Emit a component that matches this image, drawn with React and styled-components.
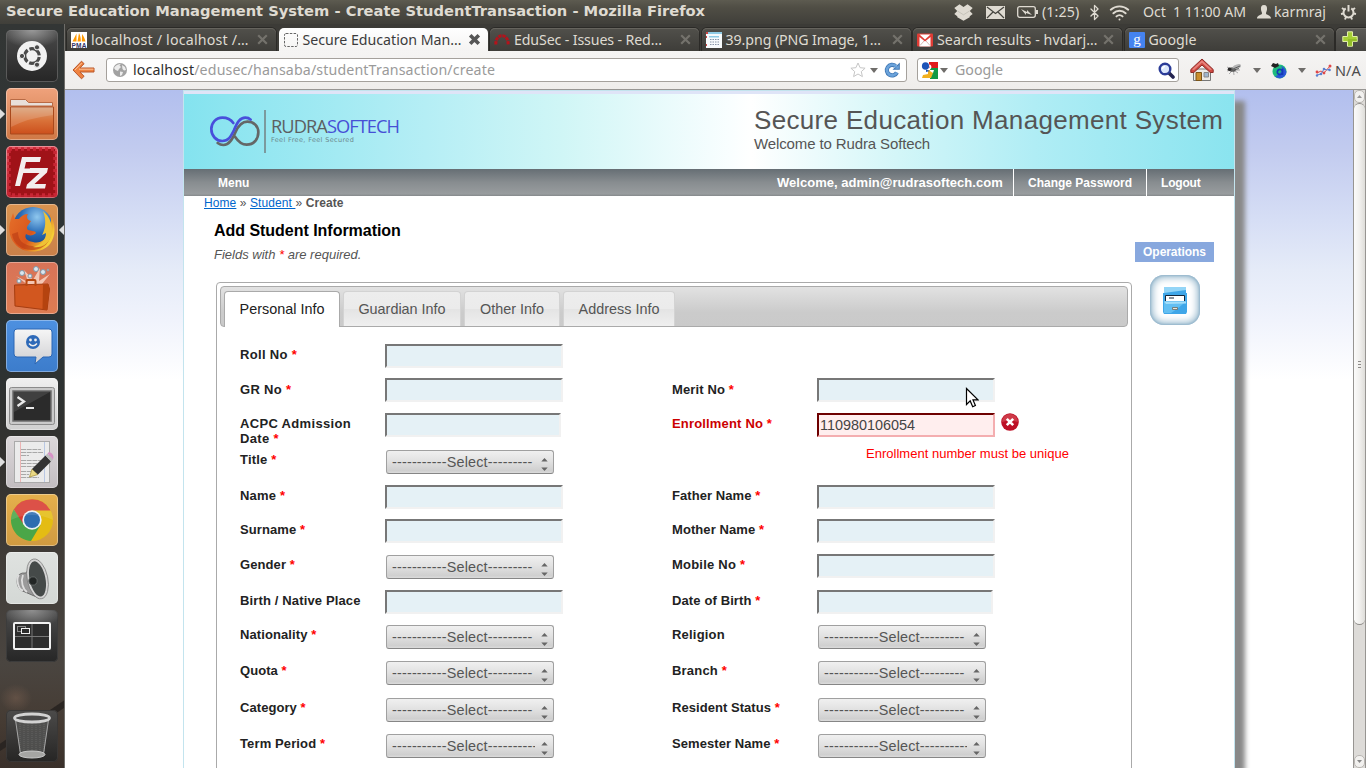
import React from "react";
import styled, { createGlobalStyle, css } from "styled-components";
import { Bluetooth, Wifi } from "lucide-react";

const sans = '"Liberation Sans", Arial, sans-serif';
const ui = '"Noto Sans", "Open Sans", sans-serif';

const Global = createGlobalStyle`
  * { box-sizing: border-box; }
  html, body { margin: 0; padding: 0; overflow: hidden; background: #3c3b37; }
  svg { display: block; flex: none; }
`;

const Screen = styled.div`
  width: 1366px;
  height: 768px;
  overflow: hidden;
  display: flex;
  flex-direction: column;
  font-family: ${sans};
`;

/* ---------- desktop panel ---------- */
const Panel = styled.header`
  height: 24px;
  flex: none;
  display: flex;
  align-items: center;
  justify-content: space-between;
  padding: 0 7px 0 6px;
  background: linear-gradient(#5d5b50, #504e45 30%, #403f3a);
  color: #dfdbd2;
`;
const WindowTitle = styled.div`
  font: bold 13.33px/24px "DejaVu Sans", sans-serif;
  transform: scaleX(1.1005);
  transform-origin: 0 50%;
  white-space: nowrap;
`;
const Indicators = styled.div`
  display: flex;
  align-items: center;
  height: 24px;
  width: 405px;
`;
const Indicator = styled.div`
  display: flex;
  align-items: center;
  flex: none;
  width: ${(p) => p.$w}px;
  font: 14.2px/24px ${ui};
  letter-spacing: ${(p) => p.$ls || 0}px;
  white-space: pre;
`;

/* ---------- launcher ---------- */
const Body = styled.div`
  flex: 1;
  display: flex;
  min-height: 0;
`;
const Launcher = styled.nav`
  width: 65px;
  flex: none;
  display: flex;
  flex-direction: column;
  gap: 6px;
  padding: 6px 0 6px 0;
  border-right: 1px solid #6f6d69;
  background:
    radial-gradient(ellipse 16px 14px at 16px 674px, rgba(120, 95, 80, 0.55), transparent),
    linear-gradient(146deg, transparent calc(91.5% - 1px), #2a2522 91.5%, #2a2522 92.3%, transparent calc(92.3% + 1px)),
    linear-gradient(#333635, #2b3233 42%, #34322f 60%, #403c38 72%, #4a4540 86%, #453b33 94%, #3a302a);
`;
const LaunchRow = styled.div`
  height: 52px;
  flex: none;
  display: flex;
  align-items: center;
  ${(p) => p.$last && "margin-top: auto;"}
`;
const Pip = styled.div`
  width: 6px;
  height: 10px;
  flex: none;
  background: ${(p) => (p.$on ? "#dedede" : "transparent")};
  clip-path: ${(p) =>
    p.$right ? "polygon(100% 0, 15% 50%, 100% 100%)" : "polygon(0 0, 85% 50%, 0 100%)"};
`;
const Tile = styled.div`
  width: 52px;
  height: 52px;
  flex: none;
  border-radius: 5px;
  overflow: hidden;
  background: ${(p) => p.$bg};
  box-shadow: inset 0 0 0 1px ${(p) => p.$edge || "rgba(255,255,255,0.35)"};
`;

/* ---------- browser chrome ---------- */
const Browser = styled.main`
  flex: 1;
  display: flex;
  flex-direction: column;
  min-width: 0;
`;
const TabStrip = styled.div`
  height: 27px;
  flex: none;
  display: flex;
  gap: 2.5px;
  padding: 4px 0 0 2px;
  background: #3c3b37;
`;
const Tab = styled.div`
  width: 209px;
  flex: none;
  display: flex;
  align-items: center;
  padding: 0 7px 0 4px;
  border-radius: 5px 5px 0 0;
  font: 14.2px/22px ${ui};
  ${(p) =>
    p.$active
      ? css`
          color: #3c3c3c;
          background: linear-gradient(#fff, #f4f3f2);
        `
      : css`
          color: #dfdbd2;
          background: linear-gradient(#51504b, #3e3d39);
          box-shadow: inset 0 1px 0 #66645e, 0 0 0 1px #2b2a27;
        `}
`;
const TabText = styled.span`
  flex: 1;
  padding-left: ${(p) => p.$gap || 2}px;
  letter-spacing: ${(p) => p.$ls || 0}px;
  white-space: nowrap;
`;
const NewTab = styled.div`
  width: 32px;
  padding: 3px 0 0 6px;
  border-radius: 5px 0 0 0;
  background: linear-gradient(#5d5c58, #454440);
  box-shadow: inset 0 1px 0 #6e6c66, 0 0 0 1px #2b2a27;
`;
const Toolbar = styled.div`
  height: 39px;
  flex: none;
  display: flex;
  align-items: center;
  padding: 0 0 0 7px;
  background: linear-gradient(#f5f4f3, #efedeb);
  border-bottom: 1px solid #989693;
`;
const Field = styled.div`
  width: ${(p) => p.$w}px;
  height: 24px;
  flex: none;
  display: flex;
  align-items: center;
  margin-left: ${(p) => p.$ml}px;
  padding: 0 ${(p) => p.$px || 5}px;
  background: #fff;
  border: 1px solid #a5a19c;
  border-radius: 3px;
  font: 14.2px/22px ${ui};
  color: #9a9a9a;
`;
const Grow = styled.span`
  flex: 1;
  padding-left: ${(p) => p.$pl}px;
  letter-spacing: ${(p) => p.$ls || 0}px;
  white-space: nowrap;
  b { font-weight: 400; color: #2e2e2e; }
`;
const Tools = styled.div`
  display: flex;
  align-items: center;
  padding-left: 11px;
  font: 14.5px/22px ${ui};
  color: #4b4b4b;
`;
const ToolGap = styled.span`
  width: 12px;
`;
const Caret = styled.i`
  width: 0;
  height: 0;
  flex: none;
  margin: 0 ${(p) => p.$r || 0}px 0 ${(p) => p.$l || 0}px;
  border: 4px solid transparent;
  border-top: 5px solid #6f6d6a;
  border-bottom: 0;
`;

/* ---------- page ---------- */
const View = styled.div`
  flex: 1;
  display: flex;
  min-height: 0;
`;
const Page = styled.div`
  flex: 1;
  overflow: hidden;
  padding-left: 118px;
  background: linear-gradient(#b2bfee, #c2cbef 60px, #d6def5 130px, #e5ebf8 180px, #f0f3fc 230px, #fff 290px);
`;
const Sheet = styled.div`
  width: 1052px;
  height: 900px;
  border: solid #c3e4ee;
  border-width: 1px 1px 0;
  background: #fff;
  box-shadow: 10px 11px 5px #888;
`;
const Banner = styled.div`
  height: 78px;
  display: flex;
  justify-content: space-between;
  border-top: 3px solid #dfe4f7;
  background: linear-gradient(90deg, #84e3ef, #b5eef5 23%, #d0f6f6 36%, #f9feff 52%, #fff 54%, #d3f6f8 68%, #b0edf5 81%, #8ae4ef);
`;
const Logo = styled.div`
  display: flex;
  padding: 16px 0 0 26px;
`;
const LogoRule = styled.div`
  width: 2px;
  height: 43px;
  margin: 0 5px 0 4px;
  background: #7b9a9e;
`;
const LogoName = styled.div`
  margin-top: 5.5px;
  font: 18.3px/20px "Open Sans", sans-serif;
  letter-spacing: -0.97px;
  color: #5c5f62;
  span { color: #4650d6; }
`;
const LogoTag = styled.div`
  margin-top: 0.5px;
  font: 6.5px/8px "DejaVu Sans", sans-serif;
  letter-spacing: 0.36px;
  color: #6b878c;
  white-space: nowrap;
`;
const LogoPic = styled.div`
  padding-top: 4.5px;
`;
const Heading = styled.div`
  width: 480px;
  padding-top: 11px;
  color: #555;
`;
const Big = styled.div`
  font-size: 26px;
  line-height: 30px;
  letter-spacing: 0.33px;
  white-space: nowrap;
`;
const Small = styled.div`
  font-size: 15px;
  line-height: 18px;
  letter-spacing: -0.12px;
`;
const NavBar = styled.div`
  height: 27px;
  display: flex;
  justify-content: flex-end;
  background: linear-gradient(#666e74, #888d90 50%, #989c9e 92%, #85898b);
  color: #fff;
  font-weight: bold;
  font-size: 12px;
  line-height: 28px;
`;
const NavMenu = styled.div`
  margin: 0 auto 0 34px;
`;
const NavItem = styled.div`
  padding-left: 14px;
  width: ${(p) => p.$w}px;
  font-size: ${(p) => p.$size || 12}px;
  letter-spacing: ${(p) => p.$ls || 0}px;
  white-space: nowrap;
  ${(p) => p.$bar && "border-left: 1px solid #fff;"}
`;
const Crumbs = styled.div`
  padding: 0 0 0 20px;
  height: 15px;
  font-size: 12px;
  line-height: 14px;
  letter-spacing: 0.09px;
  color: #555;
  white-space: pre;
  u { color: #06c; }
`;
const Columns = styled.div`
  display: flex;
`;
const Content = styled.div`
  width: 951px;
  padding-left: 30px;
`;
const Title = styled.h1`
  margin: 10px 0 0;
  font-size: 16px;
  line-height: 20px;
  letter-spacing: -0.03px;
  color: #000;
`;
const Note = styled.p`
  margin: 5px 0 18px;
  font: italic 13px/18px ${sans};
  color: #555;
`;
const Star = styled.span`
  color: #f00;
`;
const TabPanel = styled.section`
  width: 916px;
  height: 700px;
  margin-left: 2px;
  padding: 3px;
  border: 1px solid #aaa;
  border-radius: 4px;
`;
const TabBar = styled.div`
  height: 41px;
  display: flex;
  gap: 3px;
  padding: 4px 0 0 3px;
  border: 1px solid #aaa;
  border-radius: 4px;
  background: linear-gradient(#e2e2e2, #cbcbcb 65%, #cacaca);
`;
const FormTab = styled.div`
  width: ${(p) => p.$w}px;
  height: ${(p) => (p.$on ? 36 : 35)}px;
  border: 1px solid ${(p) => (p.$on ? "#aaa" : "#d3d3d3")};
  border-bottom: 0;
  border-radius: 4px 4px 0 0;
  background: ${(p) => (p.$on ? "#fff" : "linear-gradient(#ededed, #ebebeb 50%, #e4e4e4 51%, #efefef)")};
  color: ${(p) => (p.$on ? "#212121" : "#555")};
  font-size: 14.4px;
  line-height: 35px;
  text-align: center;
`;
const Form = styled.div`
  padding: 17px 0 0 20px;
`;
const Row = styled.div`
  height: ${(p) => p.$h}px;
  display: flex;
  align-items: flex-start;
`;
const Cell = styled.div`
  width: 432px;
  display: flex;
  align-items: flex-start;
`;
const Label = styled.label`
  width: 145px;
  padding: ${(p) => p.$top || 3}px 20px 0 0;
  font-weight: bold;
  font-size: 13px;
  line-height: 15px;
  letter-spacing: ${(p) => p.$ls}px;
  color: ${(p) => (p.$bad ? "#c00" : "#222")};
  ${(p) => !p.$wrap && "white-space: nowrap;"}
`;
const TextInput = styled.input`
  width: ${(p) => (p.$date ? 176 : 178)}px;
  height: 24px;
  flex: none;
  margin: 0;
  padding: 0 2px 0 1px;
  border: 2px solid;
  border-color: ${(p) => (p.$bad ? "#6e0000 #f4aeb0 #f4aeb0 #6e0000" : "#777 #f1f1f1 #f1f1f1 #777")};
  background: ${(p) => (p.$bad ? "#ffeeee" : "#e5f1f6")};
  color: #444;
  font: 14.4px ${sans};
  outline: none;
`;
const SelectBox = styled.div`
  width: 168px;
  height: 24px;
  flex: none;
  display: flex;
  align-items: center;
  margin: 1px 0 0 1px;
  padding: 0 5px;
  border: 1px solid #a0a0a0;
  border-bottom-color: #868686;
  border-radius: 3px;
  background: linear-gradient(#f0f0f0, #e2e2e2 45%, #cfcfcf 90%, #dcdcdc);
  color: #555;
  font-size: 14.4px;
`;
const SelectText = styled.span`
  width: 143px;
  overflow: hidden;
  white-space: nowrap;
  letter-spacing: 0.18px;
`;
const SelectArrows = styled.svg`
  margin: 4px 0 0 6px;
`;
const ErrorText = styled.div`
  margin: -3px 0 0 194px;
  font-size: 13px;
  line-height: 15px;
  letter-spacing: 0.02px;
  color: #f00;
  white-space: nowrap;
`;
const ErrorBadge = styled.div`
  padding-left: 6px;
`;
const Side = styled.aside`
  padding-top: 31px;
`;
const Ops = styled.div`
  width: 79px;
  height: 20px;
  background: #88a8de;
  color: #fff;
  font: bold 12px/20px ${sans};
  letter-spacing: -0.05px;
  text-align: center;
`;
const OpIcon = styled.div`
  width: 50px;
  height: 50px;
  margin: 13px 0 0 15px;
  padding: 12px 0 0 13px;
  border-radius: 14px;
  background: #fff;
  box-shadow: inset 0 0 7px 3px #9dbdd0, inset 0 0 2px 1px #7fa2bf;
`;
const ScrollTrack = styled.div`
  width: 13px;
  display: flex;
  flex-direction: column;
  background: #dddbd8;
  border: solid #979592;
  border-width: 0 1px;
`;
const ScrollEnd = styled.div`
  height: 13px;
  display: flex;
  align-items: center;
  justify-content: center;
  background: #f2f1ef;
  border-radius: 5px;
  border: 1px solid #b9b6b2;
`;
const ScrollThumb = styled.div`
  height: 522px;
  display: flex;
  flex-direction: column;
  align-items: center;
  justify-content: center;
  gap: 2px;
  border: solid #8f8d8a;
  border-width: 1px 0;
  border-radius: 6px;
  background: linear-gradient(90deg, #fbfbfa, #f1f0ee 50%, #deddd9);
  i { width: 3px; height: 1px; background: #8d8b88; }
`;
const ScrollFill = styled.div`
  flex: 1;
`;
const Pointer = styled.div`
  position: absolute;
  left: 965px;
  top: 387px;
`;

/* ---------- drawings ---------- */
const Close = ({ strong }) => (
  <svg width="13" height="13" viewBox="0 0 13 13">
    <path d="M2.2 2.2 10.8 10.8M10.8 2.2 2.2 10.8" stroke={strong ? "#565656" : "#74726c"} strokeWidth={strong ? 3.6 : 2.2} />
  </svg>
);
const BoxIcon = () => (
  <svg width="19" height="17" viewBox="0 0 19 17">
    <path d="M5.500.3 9.500 3l4-2.700L18.700 4l-2.900 3 2.900 3-3 2.200v1.100L9.500 16.800 3.300 13.300v-1.100L.3 10l2.900-3L.3 4z" fill="#dfdbd2" />
    <path d="m3.500 7 6 3.800 6-3.800" fill="none" stroke="#8b8880" strokeWidth=".6" opacity=".5" />
  </svg>
);
const PmaIcon = () => (
  <svg width="16" height="16" viewBox="0 0 16 16">
    <path d="M0 0h16v16H0z" fill="#fff" />
    <path d="M1.500 9.500C3 6 4.500 4 5.500 1.500V9.500zM6.500 9.500 8 1C9.500 4 10 7 9.800 9.500zM10.800 9.500 11 2C13 5 14 7 14.500 9.500z" fill="#f90" />
    <text x="0.500" y="15.700" fontSize="6.500" fontWeight="bold" fontFamily="Liberation Sans" fill="#336" textLength="15">PMA</text>
  </svg>
);
const BlankIcon = () => (
  <svg width="16" height="16" viewBox="0 0 16 16">
    <rect x="1.500" y="1.500" width="13" height="13" rx="1.500" fill="none" stroke="#666" strokeDasharray="2.500 1.300" />
  </svg>
);
const RedmineIcon = () => (
  <svg width="16" height="16" viewBox="0 0 16 16">
    <path d="M1.800 12.500C1.800 6.500 4.500 3.800 8 3.800S14.200 6.500 14.200 12.500" fill="none" stroke="#b5121b" strokeWidth="3" strokeDasharray="3.300 .8" />
  </svg>
);
const CalendarIcon = () => (
  <svg width="16" height="16" viewBox="0 0 16 16">
    <path d="M0 0h16v16H0z" fill="#f7fafc" />
    <path d="M0 0h16v2H0zM3 4h10v1.500H3z" fill="#8fcbe6" />
    <path d="M0 0h2v2H0zM0 4h1v2H0zM0 12h1v2H0z" fill="#c44" />
    <path d="M4 7.500h9M4 10h9M4 12.500h9" stroke="#8894a8" strokeDasharray="1.500 1" />
  </svg>
);
const GmailIcon = () => (
  <svg width="16" height="16" viewBox="0 0 16 16">
    <rect y="1.500" width="16" height="13" rx="1" fill="#e03c35" />
    <path d="M2.500 14.500V5L8 9.500 13.500 5v9.500z" fill="#fff" />
    <path d="M2.500 2.500h11L8 7.500z" fill="#fff" />
    <path d="m3 13.500 4-4.500M13 13.500 9 9" stroke="#d8b8b5" />
  </svg>
);
const GIcon = () => (
  <svg width="16" height="16" viewBox="0 0 16 16">
    <rect width="16" height="16" rx="1" fill="#4583f0" />
    <text x="8" y="11.500" textAnchor="middle" fontSize="15" fontFamily="Liberation Serif" fill="#fff">g</text>
  </svg>
);
const PlusIcon = () => (
  <svg width="16" height="16" viewBox="0 0 16 16">
    <path d="M5.500.8h5v4.700h4.700v5h-4.700v4.700h-5v-4.700H.8v-5h4.700z" fill="#a6cf35" stroke="#e3f1a6" />
    <path d="M6 8h9v2.500H10V15H6z" fill="#7fae1e" opacity=".5" />
  </svg>
);
const BackIcon = () => (
  <svg width="24" height="20" viewBox="0 0 24 20">
    <path d="M9.500 1.200 1 10l8.500 8.800 2.600-2.500-4.200-4.300H22V8H7.900l4.200-4.300z" fill="#ef8340" stroke="#b9562a" strokeLinejoin="round" />
    <path d="M3 10 9.700 3M7 9.200h14.500" stroke="#f9c29a" strokeWidth="1" fill="none" />
  </svg>
);
const GlobeIcon = () => (
  <svg width="16" height="16" viewBox="0 0 16 16">
    <circle cx="8" cy="8" r="7" fill="#a2a2a2" />
    <path d="M2 6C3.500 3.500 6 2 9 1.800L7.500 3.500 9 5 7 7 6 9 3.500 8zM10 3l3 2 1 3-2 .5L10.500 7zM8 9.500l3 .5-1 3-2 1z" fill="#ececec" />
  </svg>
);
const StarIcon = () => (
  <svg width="16" height="16" viewBox="0 0 16 16">
    <path d="m8 1 2.100 4.700 5 .5-3.800 3.400 1.100 5L8 12l-4.400 2.600 1.100-5L.9 6.200l5-.5z" fill="#fff" stroke="#c6c6c6" />
  </svg>
);
const ReloadIcon = () => (
  <svg width="17" height="17" viewBox="0 0 17 17">
    <path d="M12.900 10.500A5.300 5.300 0 1 1 11.500 4" fill="none" stroke="#4178b4" strokeWidth="4.200" />
    <path d="M8.500 7.700h7.300V.6z" fill="#4178b4" />
    <path d="M12.900 10.500A5.300 5.300 0 1 1 12.500 5" fill="none" stroke="#6ba3db" strokeWidth="2.600" />
    <path d="M11 6.700h3.800V3z" fill="#6ba3db" />
  </svg>
);
const GoogleSearchIcon = () => (
  <svg width="17" height="17" viewBox="0 0 17 17">
    <path d="M0 0h8v9H0z" fill="#fff" />
    <path d="M8 0h9v6H8z" fill="#e01b1b" />
    <path d="M9 6h8v11H9z" fill="#119944" />
    <ellipse cx="4.500" cy="4" rx="3.600" ry="3.800" fill="#1d54b8" />
    <path d="M7 8h3l2 3-2 5H1l1-3 5-1z" fill="#f2b01e" />
    <path d="M5 7.500 9 9 5 10z" fill="#1d54b8" />
    <path d="M8 2.500c2 0 3 2 2 4L8.500 8H13l-1 3-3-2z" fill="#fff" />
  </svg>
);
const Magnifier = () => (
  <svg width="17" height="17" viewBox="0 0 17 17">
    <path d="m11 11 4 4" stroke="#252550" strokeWidth="3.600" strokeLinecap="round" />
    <circle cx="7" cy="7" r="5.300" fill="#dbe7fb" stroke="#2b3c98" strokeWidth="2.400" />
    <path d="M4.500 7A2.500 2.500 0 0 1 7 4.500" stroke="#fff" strokeWidth="1.500" fill="none" />
  </svg>
);
const HomeIcon = () => (
  <svg width="24" height="24" viewBox="0 0 24 24">
    <path d="M3.500 11h17v11.500h-17z" fill="#eceae6" stroke="#777" />
    <path d="M6 14.500h5.500v8H6z" fill="#c98d2c" stroke="#7c5518" />
    <path d="M14 14.500h4.500V19H14z" fill="#9fb6cf" stroke="#888" />
    <path d="M12 1 .8 11.500v3h3L12 7l8.200 7.500h3v-3z" fill="#cf4a42" stroke="#8d2c28" strokeLinejoin="round" />
    <path d="M12 2.200 2 11.600l2 .4 8-7.200 8 7.200 2-.4z" fill="#e8837c" />
  </svg>
);
const FlyIcon = () => (
  <svg width="16" height="14" viewBox="0 0 16 14">
    <path d="m1 4 4 2M1 8l4-1M3 11l3-3M8 12 7.500 8M12 10 9 8M14 7h-4" stroke="#999" fill="none" strokeWidth=".8" />
    <ellipse cx="6.500" cy="6.500" rx="3.500" ry="2.300" fill="#5b5b5b" />
    <ellipse cx="10.800" cy="4" rx="4.500" ry="2.200" transform="rotate(-20 10 4)" fill="#b5b5b5" />
    <path d="m7 6 7-3M8 7l5-1.500" stroke="#444" strokeWidth=".8" />
    <circle cx="3.500" cy="6.300" r="1.800" fill="#2a2a2a" />
  </svg>
);
const AlexaIcon = () => (
  <svg width="17" height="17" viewBox="0 0 17 17">
    <circle cx="9.500" cy="9.500" r="7" fill="#1dbb7e" />
    <path d="M5 14.500A7 7 0 0 0 16.500 10Q15 5 11 4 15 9 5 14.500z" fill="#2b55d8" />
    <path d="m1 4 2-3 3 1 2-1 1 3-4 2z" fill="#222" />
    <path d="M12.500 6.500v6.500M12.500 9.800a2.600 2.600 0 1 0-.2 1.200" fill="none" stroke="#123cb4" strokeWidth="1.700" />
  </svg>
);
const GraphIcon = () => (
  <svg width="17" height="13" viewBox="0 0 17 13">
    <path d="m2 9 4-2 3 2 6-7" fill="none" stroke="#e04848" />
    <path d="m2 11 4-1 3-5 3 1 3-1" fill="none" stroke="#5a7fd0" />
    <g fill="#e04848"><circle cx="2" cy="8" r="1.400" /><circle cx="9" cy="9" r="1.400" /><circle cx="15" cy="2" r="1.500" /></g>
    <g fill="#5a7fd0"><circle cx="2" cy="11.500" r="1.200" /><circle cx="6" cy="10" r="1.300" /><circle cx="9" cy="5" r="1.300" /><circle cx="14.500" cy="6" r="1.300" /></g>
  </svg>
);
const LogoMark = () => (
  <svg width="50" height="32.700" viewBox="90 80 150 98">
    <g fill="none" strokeLinecap="round">
      <path d="M165 145C175 160 185 169 200 169C222 169 235 152 235 132C235 112 220 100 202 100C185 100 175 112 166 132C157 152 148 170 130 170C122 170 117 167 113 164" stroke="#646767" strokeWidth="8" />
      <path d="M160 104C150 90 138 88 127 88C107 88 94 104 94 122C94 142 108 158 127 158C146 158 152 145 162 125C172 102 180 88 196 88C203 88 208 90 212 94" stroke="#484fdb" strokeWidth="8" />
    </g>
  </svg>
);

const T = ({ children }) => (
  <svg width="52" height="52" viewBox="0 0 52 52">{children}</svg>
);
const UbuntuArt = () => (
  <T>
    <defs><radialGradient id="ub" cx=".5" cy="0" r=".6"><stop offset="0" stopColor="#999" /><stop offset="1" stopColor="#999" stopOpacity="0" /></radialGradient></defs>
    <rect width="52" height="30" fill="url(#ub)" />
    <circle cx="26" cy="26" r="15" fill="#f2f2f2" />
    <circle cx="26" cy="26" r="7.300" fill="none" stroke="#4b4b4b" strokeWidth="3.200" strokeDasharray="13.300 2" strokeDashoffset="-1" />
    <g fill="#4b4b4b" stroke="#f2f2f2" strokeWidth="1"><circle cx="16" cy="26" r="2.600" /><circle cx="31" cy="17.300" r="2.600" /><circle cx="31" cy="34.700" r="2.600" /></g>
  </T>
);
const FolderArt = () => (
  <T>
    <defs><linearGradient id="fo" x2="0" y2="1"><stop offset="0" stopColor="#d9a077" /><stop offset=".5" stopColor="#d97239" /><stop offset="1" stopColor="#cc4f1c" /></linearGradient></defs>
    <path d="M4.500 11.500h15l3 3h24V18h-42z" fill="#e8dfd9" stroke="#b96a44" />
    <path d="M4.500 19h43v27h-43z" fill="url(#fo)" stroke="#a9491c" />
    <path d="M5 19h42v8Q22 30 5 39z" fill="#fff" opacity=".15" />
  </T>
);
const FilezillaArt = () => (
  <T>
    <rect x="3" y="3" width="46" height="46" fill="#a01218" />
    <rect x="3" y="3" width="46" height="46" fill="none" stroke="#c92634" strokeWidth="3.500" strokeDasharray="3 3" />
    <path d="M9 40 16 11h19l-1.200 5H20l-1.500 6.500h10L27.300 27H17.300L14 40z" fill="#f3eeee" />
    <path d="M24 22h18l-1 4.500L28.500 38H40l-1 4.500H20l1-4L33.500 27H23z" fill="#f3eeee" />
  </T>
);
const FirefoxArt = () => (
  <T>
    <defs>
      <radialGradient id="fb" cx=".6" cy=".25" r=".8"><stop offset="0" stopColor="#8fc7ee" /><stop offset=".5" stopColor="#2a6db8" /><stop offset="1" stopColor="#123a7c" /></radialGradient>
      <linearGradient id="ff" x2="1" y2=".5"><stop offset="0" stopColor="#e5702a" /><stop offset=".6" stopColor="#d9551c" /><stop offset="1" stopColor="#f6cf36" /></linearGradient>
    </defs>
    <circle cx="27" cy="23" r="20" fill="url(#fb)" />
    <path d="M6 12C2 22 2 32 9 40C17 50 36 50 44 40C50 32 50 20 44 10C46 18 45 23 42 27C41 36 34 40 27 38C21 37 18 34 20 30C23 32 27 32 30 29L29 27.500L22 26C20 24 21 22 23 20L25 17C21 16 20 13 22 10C18 10 15 12 13 15L9 15L7 9z" fill="url(#ff)" />
    <path d="M6 30C7 40 17 47 28 46C38 45 44 38 45 30C42 40 34 43 26 42C17 41 12 36 12 28z" fill="#b93a14" opacity=".6" />
    <path d="M37 7C44 13 48 22 45 33C41 42 34 44 27 43C35 41 40 36 40 29L36 31C39 26 41 17 37 7z" fill="#efc235" />
  </T>
);
const SoftwareArt = () => (
  <T>
    <path d="M26 26 10 14 22 20 18 8 27 18 34 6 33 19 44 12 36 22z" fill="#ffe9dd" opacity=".7" />
    <g fill="#dce7ef" stroke="#8198a8" strokeWidth="1"><circle cx="16" cy="11" r="2.500" /><circle cx="30" cy="7" r="2.500" /><circle cx="13" cy="19" r="2" /><circle cx="37" cy="10" r="2.500" /><circle cx="24" cy="14" r="2" /><circle cx="42" cy="8" r="1" /></g>
    <path d="M8.500 23 42 22 43.500 27 41 48 9 44z" fill="#d2571f" stroke="#a63d10" />
    <path d="M37 23 42 22 43.500 27 41 48 36.500 47z" fill="#b5430f" />
    <path d="M20.500 24v-5q0-1 1-1h7q1 0 1 1v5" fill="none" stroke="#b8480f" strokeWidth="2" />
  </T>
);
const EmpathyArt = () => (
  <T>
    <defs><linearGradient id="em" x2="0" y2="1"><stop offset="0" stopColor="#f6f6f6" /><stop offset="1" stopColor="#cfcfd2" /></linearGradient></defs>
    <path d="M11 9h32q3 0 3 3v22q0 3-3 3h-6l-8 7 1-7H11q-3 0-3-3V12q0-3 3-3z" fill="url(#em)" stroke="#2c67b4" />
    <circle cx="27" cy="22" r="7" fill="#2d69b8" />
    <circle cx="24.500" cy="20" r="1.400" fill="#eee" /><circle cx="29.500" cy="20" r="1.400" fill="#eee" />
    <path d="M23 23.500q4 4.500 8 0" stroke="#eee" strokeWidth="1.500" fill="none" />
  </T>
);
const TerminalArt = () => (
  <T>
    <rect x="3.500" y="9.500" width="45" height="37" rx="2" fill="#c9c9c9" stroke="#8b8b8b" />
    <rect x="7" y="13" width="38" height="30" fill="#2b2b2b" stroke="#6c6c6c" strokeWidth="1.500" />
    <path d="M8 14h36L8 34z" fill="#fff" opacity=".1" />
    <path d="m11.500 19 6.500 4.500-6.500 4.500" fill="none" stroke="#e8e8e8" strokeWidth="2.300" />
    <path d="M20 30h8" stroke="#e8e8e8" strokeWidth="2.200" />
  </T>
);
const EditorArt = () => (
  <T>
    <rect x="8.500" y="5.500" width="35" height="41" fill="#ebebeb" stroke="#aaa" />
    <path d="M14.500 6v40" stroke="#ecb4b4" /><path d="M38.500 6v40" stroke="#b9c8e4" />
    <path d="M15 13.500h20M15 16.500h22M15 19.500h8M15 24.500h22M15 27.500h20M15 30.500h18M15 35.500h14M15 38.500h8M15 41.500h18" stroke="#a8a8a8" strokeDasharray="5 .7" />
    <path d="m23.500 41 2.500-8 6 5.500z" fill="#e9d884" stroke="#a28c34" strokeWidth=".7" />
    <path d="M26 33 39.500 19.500l5.500 6L32 38.500z" fill="#333" />
    <path d="m39.500 19.500 2-2 5.500 6-2 2z" fill="#bbb" /><path d="m41.500 17.500 1.500-1.500q4 1 4.500 5L47 23.500z" fill="#d692c6" />
  </T>
);
const ChromeArt = () => (
  <T>
    <circle cx="26" cy="26" r="21" fill="#e4bc13" />
    <path d="M7.800 15.500A21 21 0 0 1 44.500 16.500H26L17 31z" fill="#d8392f" />
    <path d="M7.800 15.500A21 21 0 0 0 25 47L34.500 31 18 31z" fill="#4aa648" />
    <circle cx="26" cy="26" r="9.700" fill="#edf1f5" /><circle cx="26" cy="26" r="8" fill="#2e6db0" />
    <path d="M5 26A21 21 0 0 1 47 26Q26 16 5 26z" fill="#fff" opacity=".12" />
  </T>
);
const SoundArt = () => (
  <T>
    <path d="M20 21Q11 20 11 29T19 40L33 46 29 8z" fill="#9a9a9a" stroke="#6d6d6d" />
    <path d="M13 23Q10.500 26 12 32T17 38.500M17 23Q15 28 16.500 33T21 40" stroke="#dedede" strokeWidth="1.800" fill="none" />
    <ellipse cx="31.500" cy="27" rx="9" ry="19" transform="rotate(-12 31 27)" fill="#454a49" stroke="#d3d3d3" strokeWidth="2.200" />
    <ellipse cx="31.500" cy="27" rx="10.300" ry="20.200" transform="rotate(-12 31 27)" fill="none" stroke="#777" strokeWidth=".7" />
    <circle cx="27" cy="29" r="4.200" fill="#222625" stroke="#626766" />
  </T>
);
const WorkspaceArt = () => (
  <T>
    <defs><radialGradient id="ws" cx=".5" cy="0" r=".6"><stop offset="0" stopColor="#909090" /><stop offset="1" stopColor="#909090" stopOpacity="0" /></radialGradient></defs>
    <rect width="52" height="30" fill="url(#ws)" />
    <rect x="8" y="13" width="36" height="26" rx="1" fill="#2d2d2d" stroke="#f1f1f1" strokeWidth="2" />
    <path d="M26 14v24M9 26.500h34" stroke="#777" />
    <rect x="11.500" y="16.500" width="8" height="5" fill="none" stroke="#888" />
    <rect x="15.500" y="18.500" width="8" height="5" fill="#2d2d2d" stroke="#eee" />
  </T>
);
const TrashArt = () => (
  <T>
    <path d="M9 8h34l-5 36q-12 6-24 0z" fill="#525251" opacity=".9" />
    <path d="M14 12v30M18 13v32M22 13v33M26 13v33M30 13v33M34 13v32M38 12v30" stroke="#646463" strokeDasharray="1 1" />
    <path d="M9.500 10 14.500 44M42.500 10 37.500 44" stroke="#a5a5a5" />
    <ellipse cx="26" cy="44.500" rx="13" ry="3.500" fill="#a5a5a3" stroke="#c9c9c9" />
    <ellipse cx="26" cy="8" rx="17.500" ry="4" fill="#494949" stroke="#d2d2d2" strokeWidth="2.800" />
  </T>
);

const launcher = [
  { art: UbuntuArt, bg: "linear-gradient(#4a4a4a,#262626)", edge: "#5a5a5a" },
  { art: FolderArt, bg: "linear-gradient(#efa27c,#cf7845)", left: true },
  { art: FilezillaArt, bg: "linear-gradient(#e0505c,#b81c28)" },
  { art: FirefoxArt, bg: "linear-gradient(#d9934f,#c98049)", left: true, right: true },
  { art: SoftwareArt, bg: "linear-gradient(#d87358,#dd7c52)" },
  { art: EmpathyArt, bg: "linear-gradient(#4d90e0,#3c7ccb)" },
  { art: TerminalArt, bg: "linear-gradient(#f0f0f0,#cfcfcf)" },
  { art: EditorArt, bg: "linear-gradient(#dcd8da,#c3bec1)", left: true },
  { art: ChromeArt, bg: "linear-gradient(#e5b04c,#d09a41)" },
  { art: SoundArt, bg: "linear-gradient(#dfe2e0,#d4d8d5)" },
  { art: WorkspaceArt, bg: "linear-gradient(#4b4b4b,#262626)", edge: "#3c3c3c" },
  { art: TrashArt, bg: "linear-gradient(#4c4b4a,#262524)", edge: "#393736", last: true },
];

const tabs = [
  { icon: PmaIcon, text: "localhost / localhost /…", ls: 0.21 },
  { icon: BlankIcon, text: "Secure Education Man…", ls: -0.02, active: true },
  { icon: RedmineIcon, text: "EduSec - Issues - Red…", ls: -0.13 },
  { icon: CalendarIcon, text: "39.png (PNG Image, 1…", ls: -0.08 },
  { icon: GmailIcon, text: "Search results - hvdarj…", ls: 0.08 },
  { icon: GIcon, text: "Google", ls: 0 },
];

const rows = [
  { h: 34, left: { label: "Roll No", req: true, ls: 0.33 } },
  { h: 35, top: 4, left: { label: "GR No", req: true, ls: 0.33 }, right: { label: "Merit No", req: true, ls: 0.13 } },
  { h: 36, left: { label: "ACPC Admission Date", req: true, date: true, wrap: true, ls: 0.33 }, right: { label: "Enrollment No", req: true, bad: true, value: "110980106054", ls: 0.17 } },
  { h: 36, left: { label: "Title", req: true, select: true, ls: 0.2 }, error: "Enrollment number must be unique" },
  { h: 34, left: { label: "Name", req: true, ls: 0.17 }, right: { label: "Father Name", req: true, ls: 0.07 } },
  { h: 35, left: { label: "Surname", req: true, ls: 0.1 }, right: { label: "Mother Name", req: true, ls: 0.08 } },
  { h: 36, left: { label: "Gender", req: true, select: true, ls: 0.1 }, right: { label: "Mobile No", req: true, ls: 0.22 } },
  { h: 34, left: { label: "Birth / Native Place", ls: 0.14 }, right: { label: "Date of Birth", req: true, date: true, ls: 0.12 } },
  { h: 36, left: { label: "Nationality", req: true, select: true, ls: 0.1 }, right: { label: "Religion", select: true, ls: 0.2 } },
  { h: 37, left: { label: "Quota", req: true, select: true, ls: 0.07 }, right: { label: "Branch", req: true, select: true, ls: 0.2 } },
  { h: 36, left: { label: "Category", req: true, select: true, ls: 0.06 }, right: { label: "Resident Status", req: true, select: true, ls: 0.05 } },
  { h: 36, left: { label: "Term Period", req: true, select: true, long: true, ls: 0.12 }, right: { label: "Semester Name", req: true, select: true, long: true, ls: 0.07 } },
];

const Select = ({ long }) => (
  <SelectBox>
    <SelectText>{long ? "-----------Select----------" : "-----------Select---------"}</SelectText>
    <SelectArrows width="7" height="13" viewBox="0 0 7 13">
      <path d="M.3 3.500 3.500 0l3.200 3.500zM.3 9.500 3.500 13l3.200-3.500z" fill="#666" />
    </SelectArrows>
  </SelectBox>
);
const FormCell = ({ f, top }) => (
  <Cell>
    <Label $top={top} $bad={f.bad} $wrap={f.wrap} $ls={f.ls}>
      {f.label}{f.req && <> <Star>*</Star></>}
    </Label>
    {f.select ? <Select long={f.long} /> : <TextInput readOnly value={f.value || ""} $date={f.date} $bad={f.bad} />}
    {f.bad && (
      <ErrorBadge>
        <svg width="18" height="18" viewBox="0 0 18 18">
          <circle cx="9" cy="9" r="8.800" fill="#bd1026" />
          <path d="M1 9a8 8 0 0 1 16 0q-8-3-16 0z" fill="#e0646a" opacity=".5" />
          <path d="m5.800 5.800 6.400 6.400M12.200 5.800l-6.400 6.400" stroke="#fff" strokeWidth="2.600" />
        </svg>
      </ErrorBadge>
    )}
  </Cell>
);

export default function App() {
  return (
    <Screen>
      <Global />
      <Panel>
        <WindowTitle>Secure Education Management System - Create StudentTransaction - Mozilla Firefox</WindowTitle>
        <Indicators>
          <Indicator $w={32}><BoxIcon /></Indicator>
          <Indicator $w={31}>
            <svg width="19" height="13" viewBox="0 0 19 13"><path d="M0 0h19v13H0z" fill="#dfdbd2" /><path d="m1 1 8.500 6.500L18 1M1 12l6-6M18 12l-6-6" fill="none" stroke="#45443e" strokeWidth="1.200" /></svg>
          </Indicator>
          <Indicator $w={25}>
            <svg width="21" height="12" viewBox="0 0 21 12"><rect x=".7" y=".7" width="17.600" height="10.600" rx="2" fill="none" stroke="#dfdbd2" strokeWidth="1.300" /><path d="M19 4h2v4h-2z" fill="#dfdbd2" /><path d="m4 3 6 3V4l5 5-6-2v2z" fill="#dfdbd2" /></svg>
          </Indicator>
          <Indicator $w={44} $ls={0.1}>(1:25)</Indicator>
          <Indicator $w={23}><Bluetooth size={17} strokeWidth={1.8} /></Indicator>
          <Indicator $w={34}><Wifi size={21} strokeWidth={2.2} /></Indicator>
          <Indicator $w={114} $ls={-0.07}>Oct  1 11:00 AM</Indicator>
          <Indicator $w={17}>
            <svg width="14" height="14" viewBox="0 0 14 14"><path d="M7 0c2.500 0 3.300 2 3 4.500C9.800 6.500 9 7 9 8.500c0 1.500 5 1.500 5 5H0c0-3.500 5-3.500 5-5C5 7 4.200 6.500 4 4.500 3.700 2 4.500 0 7 0z" fill="#dfdbd2" /></svg>
          </Indicator>
          <Indicator $w={66}>karmraj</Indicator>
          <Indicator $w={17}>
            <svg width="17" height="17" viewBox="0 0 17 17" fill="none" stroke="#dfdbd2"><path d="M5.700 4.300a5 5 0 1 0 5.600 0" strokeWidth="2" /><path d="M8.500 1v6.500" strokeWidth="2" /><path d="m2 4 2 1.500M15 4l-2 1.500M1 10l2.500-.5M16 10l-2.500-.5M5 15.500 6 13M12 15.500 11 13" strokeWidth="2" /></svg>
          </Indicator>
        </Indicators>
      </Panel>
      <Body>
        <Launcher>
          {launcher.map((l, i) => (
            <LaunchRow key={i} $last={l.last}>
              <Pip $on={l.left} />
              <Tile $bg={l.bg} $edge={l.edge}><l.art /></Tile>
              <Pip $right $on={l.right} />
            </LaunchRow>
          ))}
        </Launcher>
        <Browser>
          <TabStrip>
            {tabs.map((t) => (
              <Tab key={t.text} $active={t.active}>
                <t.icon />
                <TabText $ls={t.ls} $gap={4}>{t.text}</TabText>
                <Close strong={t.active} />
              </Tab>
            ))}
            <NewTab><PlusIcon /></NewTab>
          </TabStrip>
          <Toolbar>
            <BackIcon />
            <Field $w={801} $ml={10}>
              <GlobeIcon />
              <Grow $pl={5} $ls={0.14}><b>localhost</b>/edusec/hansaba/studentTransaction/create</Grow>
              <StarIcon />
              <Caret $l={4} $r={6} />
              <ReloadIcon />
            </Field>
            <Field $w={262} $ml={10} $px={3}>
              <GoogleSearchIcon />
              <Caret $l={2} />
              <Grow $pl={7}>Google</Grow>
              <Magnifier />
            </Field>
            <Tools>
              <HomeIcon />
              <ToolGap />
              <FlyIcon />
              <Caret $l={11} $r={9} />
              <AlexaIcon />
              <Caret $l={11} $r={9} />
              <GraphIcon />
              <Grow $pl={3}>N/A</Grow>
            </Tools>
          </Toolbar>
          <View>
            <Page>
              <Sheet>
                <Banner>
                  <Logo>
                    <LogoPic><LogoMark /></LogoPic>
                    <LogoRule />
                    <div>
                      <LogoName>RUDRA<span>SOFTECH</span></LogoName>
                      <LogoTag>Feel Free, Feel Secured</LogoTag>
                    </div>
                  </Logo>
                  <Heading>
                    <Big>Secure Education Management System</Big>
                    <Small>Welcome to Rudra Softech</Small>
                  </Heading>
                </Banner>
                <NavBar>
                  <NavMenu>Menu</NavMenu>
                  <NavItem $w={250} $size={13} $ls={0.03}>Welcome, admin@rudrasoftech.com</NavItem>
                  <NavItem $w={133} $bar>Change Password</NavItem>
                  <NavItem $w={88} $bar $ls={-0.2}>Logout</NavItem>
                </NavBar>
                <Crumbs><u>Home</u> » <u>Student </u>» <b>Create</b></Crumbs>
                <Columns>
                  <Content>
                    <Title>Add Student Information</Title>
                    <Note>Fields with <Star>*</Star> are required.</Note>
                    <TabPanel>
                      <TabBar>
                        <FormTab $w={116} $on>Personal Info</FormTab>
                        <FormTab $w={118}>Guardian Info</FormTab>
                        <FormTab $w={96}>Other Info</FormTab>
                        <FormTab $w={112}>Address Info</FormTab>
                      </TabBar>
                      <Form>
                        {rows.map((r, i) => (
                          <Row key={i} $h={r.h}>
                            <FormCell f={r.left} top={r.top} />
                            {r.right && <FormCell f={r.right} top={r.top} />}
                            {r.error && <ErrorText>{r.error}</ErrorText>}
                          </Row>
                        ))}
                      </Form>
                    </TabPanel>
                  </Content>
                  <Side>
                    <Ops>Operations</Ops>
                    <OpIcon>
                      <svg width="24" height="27" viewBox="0 0 24 27">
                        <path d="M1 0h22v6h1v19l-1 2H1l-1-2V6h1z" fill="#3fa6e8" />
                        <path d="M1 0h22v3L1 6z" fill="#93d5f7" />
                        <path d="M2.500 8.500h19V14h-19z" fill="#fff" />
                        <path d="M2.500 14V8.500h19V14M6 11h5" stroke="#14263a" fill="none" />
                        <path d="M1 14.500h22L14 22 8 26H1z" fill="#63bff2" />
                        <path d="M1 14.500h22v2L3 17z" fill="#a4def9" />
                        <path d="M9.500 20.500h5v2h-5z" fill="#e9e4da" stroke="#6b6b60" strokeWidth=".8" />
                      </svg>
                    </OpIcon>
                  </Side>
                </Columns>
              </Sheet>
            </Page>
            <ScrollTrack>
              <ScrollEnd><svg width="5" height="3"><path d="M0 3 2.500 0 5 3z" fill="#999" /></svg></ScrollEnd>
              <ScrollThumb><i /><i /><i /></ScrollThumb>
              <ScrollFill />
              <ScrollEnd><svg width="5" height="3"><path d="M0 0 2.500 3 5 0z" fill="#888" /></svg></ScrollEnd>
            </ScrollTrack>
          </View>
        </Browser>
      </Body>
      <Pointer>
        <svg width="14" height="21" viewBox="0 0 14 21">
          <path d="M1.500 1.500v16l3.700-3.600 2.500 5.800 2.700-1.200L8 12.900h5z" fill="#fff" stroke="#000" strokeWidth="1.200" />
        </svg>
      </Pointer>
    </Screen>
  );
}
